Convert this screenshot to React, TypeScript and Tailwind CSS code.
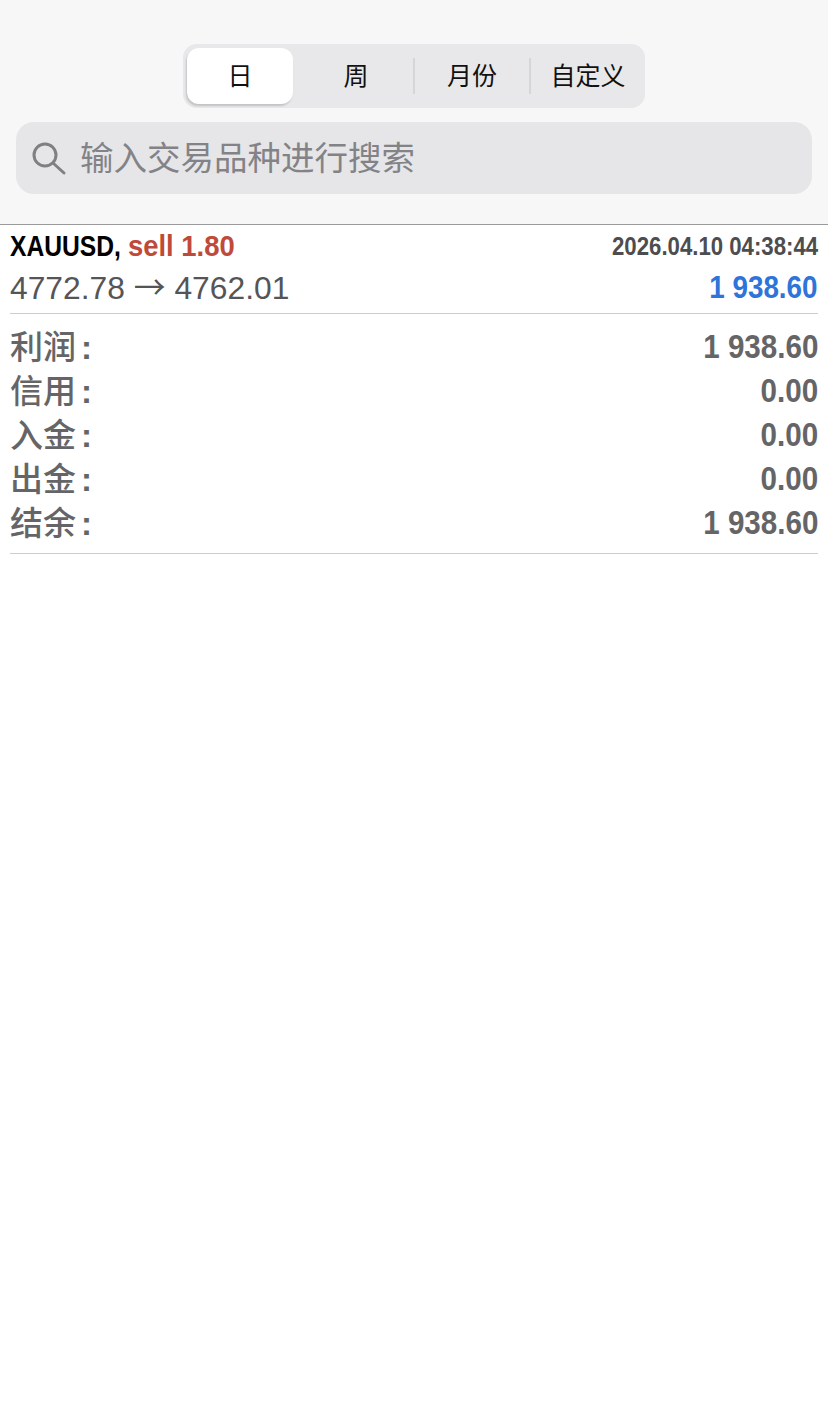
const cjk = "font-['Liberation_Sans','Noto_Sans_CJK_SC',sans-serif]";

const totals = [
  { label: "利润", value: "1 938.60" },
  { label: "信用", value: "0.00" },
  { label: "入金", value: "0.00" },
  { label: "出金", value: "0.00" },
  { label: "结余", value: "1 938.60" },
];

function Segments() {
  return (
    <div className="flex h-16 w-[462px] items-center rounded-[14px] bg-[#e8e8ea] px-1 text-[25px] text-[#111]">
      <div className="flex h-14 w-[106px] items-center justify-center rounded-xl bg-white pt-0.5 shadow-[-1px_2px_2px_rgba(0,0,0,0.16)]">
        日
      </div>
      <div className="flex h-9 w-[122px] items-center justify-center border-r-2 border-[#d6d6d8] pt-0.5 pl-1.5">周</div>
      <div className="flex h-9 w-[116px] items-center justify-center border-r-2 border-[#d6d6d8] pt-0.5">月份</div>
      <div className="flex h-9 flex-1 items-center justify-center pt-0.5 pl-1">自定义</div>
    </div>
  );
}

function SearchBox() {
  return (
    <div className="flex h-[72px] w-[796px] items-center gap-[13px] rounded-[18px] bg-[#e6e6e8] pl-[15px] text-[#838387]">
      <svg width="36" height="36" viewBox="0 0 36 36" fill="none" stroke="#808084" strokeWidth="3" strokeLinecap="round">
        <circle cx="14" cy="15" r="11" />
        <path d="M22 23 L33 33" />
      </svg>
      <span className="pt-0.5 text-[33.5px] leading-none">输入交易品种进行搜索</span>
    </div>
  );
}

export default function App() {
  return (
    <div className={`min-h-[1428px] bg-white ${cjk}`}>
      <div className="flex h-[225px] flex-col items-center gap-3.5 border-b border-[#9a9a9a] bg-[#f7f7f8] pt-11">
        <Segments />
        <SearchBox />
      </div>

      <div className="px-2.5">
        <div className="border-b border-[#cdcdcd] pb-1">
          <div className="flex h-11 items-center justify-between font-bold">
            <div className="flex text-[29px]">
              <span className="w-[118px] origin-left scale-x-[0.85] whitespace-nowrap text-black">XAUUSD,</span>
              <span className="origin-left scale-x-[0.945] whitespace-nowrap text-[#c04a3a]">sell 1.80</span>
            </div>
            <div className="origin-right scale-x-[0.888] whitespace-nowrap text-[25px] text-[#4d4d4f]">
              2026.04.10 04:38:44
            </div>
          </div>
          <div className="flex h-10 items-center justify-between pb-1">
            <div className="text-[31.8px] text-[#555557]">
              4772.78 <span className="font-['Noto_Sans_CJK_SC']">→</span> 4762.01
            </div>
            <div className="origin-right scale-x-[0.87] whitespace-nowrap text-[32px] font-bold text-[#2f74d8]">
              1 938.60
            </div>
          </div>
        </div>

        <div className="border-b border-[#cdcdcd] pt-[11px] pb-2">
          {totals.map((row) => (
            <div key={row.label} className="flex h-11 items-center justify-between text-[#656567]">
              <span className="flex items-center gap-[5px] text-[33px] font-medium leading-none">
                {row.label}
                <span className="font-bold">:</span>
              </span>
              <span className="origin-right scale-x-[0.87] whitespace-nowrap pb-0.5 text-[34px] font-bold">
                {row.value}
              </span>
            </div>
          ))}
        </div>
      </div>
    </div>
  );
}
